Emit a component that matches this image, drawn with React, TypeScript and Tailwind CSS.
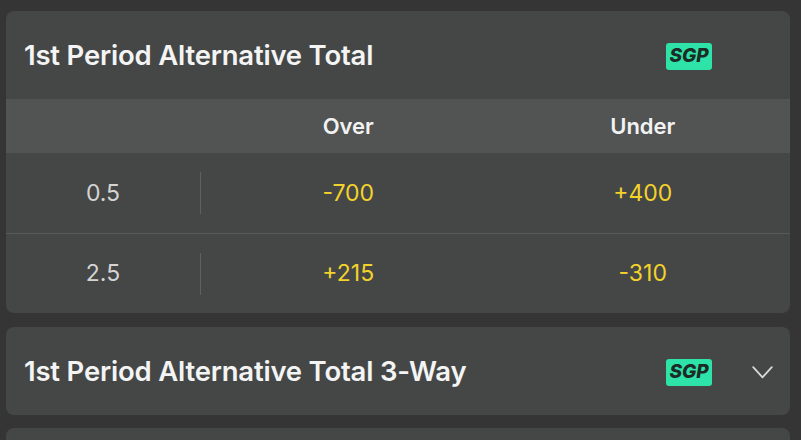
const ROWS = [
  { line: "0.5", over: "-700", under: "+400" },
  { line: "2.5", over: "+215", under: "-310" },
];

function SgpBadge() {
  return (
    <span className="flex h-[27px] w-[46px] shrink-0 items-center justify-center rounded-[3px] bg-[#2de3a8] text-[19px] font-extrabold italic text-[#1d2b26]">
      SGP
    </span>
  );
}

export default function App() {
  return (
    <div
      className="h-[440px] w-[801px] overflow-hidden bg-[#353535] pl-[6px] pr-[11px] pt-[11px]"
      style={{ fontFamily: "Inter, 'Noto Sans', sans-serif" }}
    >
      <div className="overflow-hidden rounded-[8px] bg-[#444746]">
        <div className="flex h-[88px] items-center pl-[18px] pr-[78px] pt-[2px]">
          <h2 className="flex-1 text-[27.5px] font-semibold tracking-[-0.2px] text-[#f4f4f4]">
            1st Period Alternative Total
          </h2>
          <SgpBadge />
        </div>

        <div className="grid h-[54px] grid-cols-[195px_1fr_1fr] items-center bg-[#515453] text-[22px] font-semibold text-[#f2f2f2]">
          <div />
          <div className="text-center">Over</div>
          <div className="text-center">Under</div>
        </div>

        {ROWS.map((r, i) => (
          <div
            key={r.line}
            className={`grid h-[80px] grid-cols-[195px_1fr_1fr] items-center text-[23px] ${
              i > 0 ? "border-t border-[#585b5a]" : ""
            }`}
          >
            <div className="flex h-[42px] items-center justify-center border-r border-[#5e6160] text-[#d4d4d4]">
              {r.line}
            </div>
            <div className="text-center text-[#f3d22b]">{r.over}</div>
            <div className="text-center text-[#f3d22b]">{r.under}</div>
          </div>
        ))}
      </div>

      <div className="mt-[14px] flex h-[88px] items-center rounded-[8px] bg-[#444746] pl-[18px] pr-[17px] pt-[2px]">
        <h2 className="flex-1 text-[27.5px] font-semibold tracking-[-0.2px] text-[#f4f4f4]">
          1st Period Alternative Total 3-Way
        </h2>
        <SgpBadge />
        <svg
          viewBox="0 0 21 13"
          className="ml-[40px] h-[13px] w-[21px] text-[#d8d8d8]"
          fill="none"
          stroke="currentColor"
          strokeWidth={1.8}
          strokeLinecap="round"
          strokeLinejoin="round"
        >
          <polyline points="1.2,1.2 10.5,11.3 19.8,1.2" />
        </svg>
      </div>

      <div className="mt-[13px] h-[88px] rounded-[8px] bg-[#444746]" />
    </div>
  );
}
